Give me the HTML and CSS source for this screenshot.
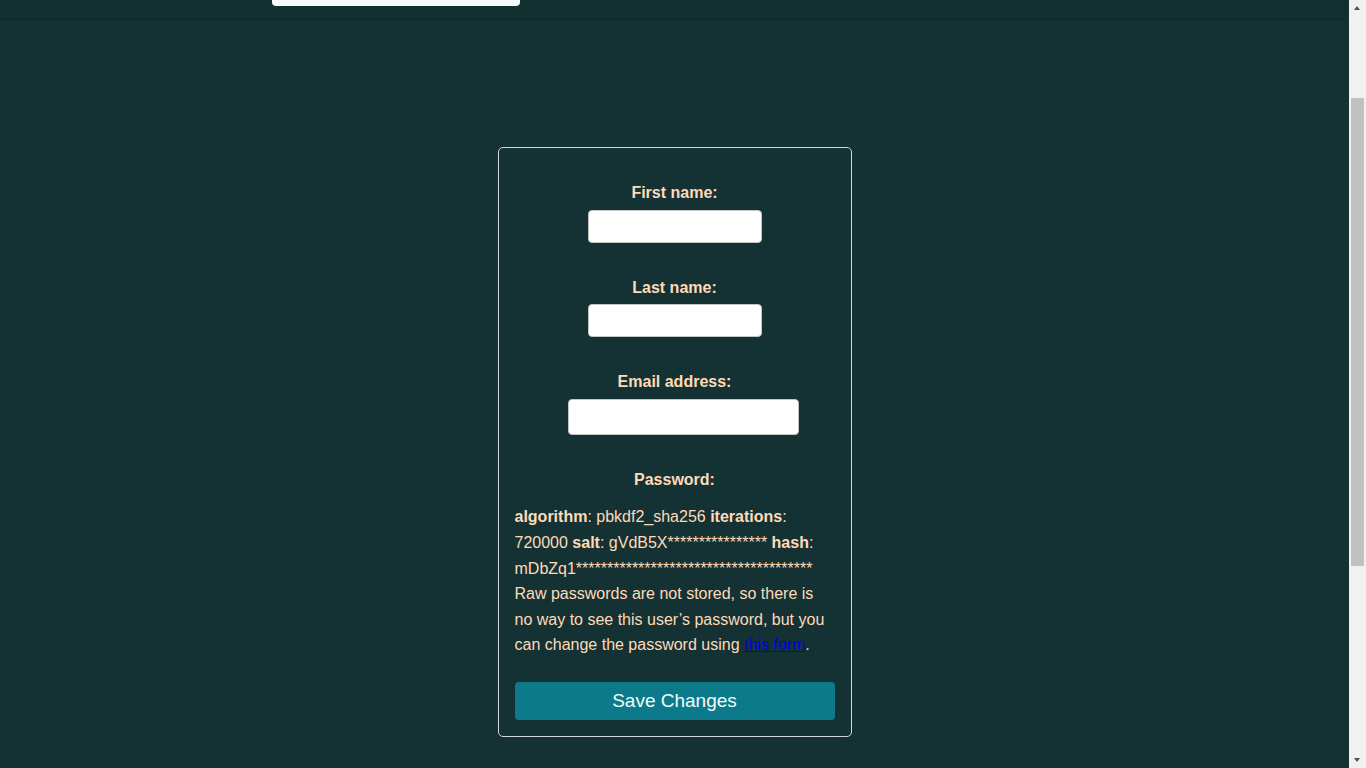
FILE: index.html
```html
<!DOCTYPE html>
<html lang="en">
<head>
<meta charset="utf-8">
<title>Edit profile</title>
<link rel="stylesheet" href="styles.css">
</head>
<body>
<header class="site-header">
  <div class="search-box"></div>
</header>
<main class="page">
  <form class="card">
    <div class="field">
      <label class="field-label" for="first">First name:</label>
      <input class="text-input" id="first" type="text">
    </div>
    <div class="field">
      <label class="field-label" for="last">Last name:</label>
      <input class="text-input" id="last" type="text">
    </div>
    <div class="field">
      <label class="field-label" for="email">Email address:</label>
      <input class="text-input email-input" id="email" type="email">
    </div>
    <div class="field password-field">
      <div class="field-label">Password:</div>
      <p class="help"><strong>algorithm</strong>: pbkdf2_sha256 <strong>iterations</strong>: 720000 <strong>salt</strong>: gVdB5X**************** <strong>hash</strong>: mDbZq1************************************** Raw passwords are not stored, so there is no way to see this user’s password, but you can change the password using <a class="link" href="#">this form</a>.</p>
    </div>
    <button class="save-btn" type="button">Save Changes</button>
  </form>
</main>
<div class="scrollbar" aria-hidden="true">
  <div class="sb-arrow sb-up"></div>
  <div class="sb-track"><div class="sb-thumb"></div></div>
  <div class="sb-arrow sb-down"></div>
</div>
<script src="script.js"></script>
</body>
</html>
```
FILE: styles.css
```css
html, body {
  margin: 0;
  padding: 0;
}
body {
  background: #143233;
  font-family: "Liberation Sans", Arial, sans-serif;
  font-size: 16px;
  color: #ffdab9;
  padding-right: 17px;
}
.site-header {
  height: 152px;
  box-sizing: border-box;
  background: #133031;
  border-bottom: 1px solid #0f2a2b;
  display: flex;
  align-items: flex-end;
  padding: 0 0 13px 272px;
}
.search-box {
  width: 248px;
  height: 36px;
  background: #f8f9fa;
  border-radius: 4px;
}
.page {
  display: flex;
  justify-content: center;
  padding: 127px 0 334px;
}
.card {
  width: 354px;
  box-sizing: border-box;
  border: 1px solid #d2d6d6;
  border-radius: 5px;
  padding: 17px 16px 16px;
  display: flex;
  flex-direction: column;
}
.field {
  text-align: center;
  margin: 15px 0 17px;
}
.field-label {
  display: block;
  font-weight: bold;
  line-height: 25.6px;
  margin-bottom: 4px;
}
.text-input {
  display: inline-block;
  vertical-align: top;
  width: 174px;
  height: 33px;
  box-sizing: border-box;
  border: 1px solid #c4c4c4;
  border-radius: 4px;
  background: #fff;
  margin: 0;
  padding: 2px 6px;
  font: 13px "Liberation Sans", Arial, sans-serif;
}
.email-input {
  width: 231px;
  height: 36px;
  margin-left: 17px;
}
.password-field {
  margin-bottom: 16px;
}
.password-field .field-label {
  margin-bottom: 0;
}
.help {
  text-align: left;
  margin: 12px 0 0;
  line-height: 25.6px;
}
.help strong {
  font-weight: bold;
}
.link {
  color: #0000ee;
  text-decoration: underline;
}
.save-btn {
  margin-top: 8px;
  width: 320px;
  height: 38px;
  border: none;
  border-radius: 4px;
  background: #0c7a8a;
  color: #f4fbfc;
  font: 19px "Liberation Sans", Arial, sans-serif;
  padding: 0;
  cursor: pointer;
}

/* classic scrollbar drawn over the right edge */
.scrollbar {
  position: fixed;
  top: 0;
  right: 0;
  width: 17px;
  height: 100vh;
  background: #f1f1f1;
  display: flex;
  flex-direction: column;
}
.sb-arrow {
  height: 17px;
  flex: none;
  position: relative;
}
.sb-arrow::after {
  content: "";
  position: absolute;
  left: 5px;
  width: 0;
  height: 0;
  border-left: 3.5px solid transparent;
  border-right: 3.5px solid transparent;
}
.sb-up::after {
  top: 6px;
  border-bottom: 4px solid #505050;
}
.sb-down::after {
  top: 7px;
  border-top: 4px solid #505050;
}
.sb-track {
  flex: 1;
  padding-top: 81px;
}
.sb-thumb {
  margin: 0 2px;
  height: 468px;
  background: #c1c1c1;
}
```
FILE: script.js
```js
window.scrollTo(0, 132);
window.addEventListener('load', function () {
  window.scrollTo(0, 132);
});
```
